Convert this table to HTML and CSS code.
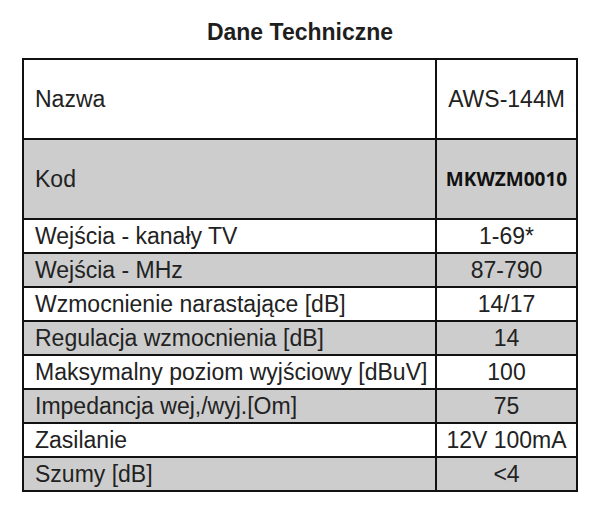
FILE: index.html
```html
<!DOCTYPE html>
<html lang="pl">
<head>
<meta charset="utf-8">
<title>Dane Techniczne</title>
<link rel="stylesheet" href="styles.css">
</head>
<body>
<div class="page">
  <h1 class="title">Dane Techniczne</h1>
  <table class="specs">
    <tr class="tall"><td class="name">Nazwa</td><td class="val">AWS-144M</td></tr>
    <tr class="tall gray"><td class="name">Kod</td><td class="val code">MKWZM0010</td></tr>
    <tr><td class="name">Wejścia - kanały TV</td><td class="val">1-69*</td></tr>
    <tr class="gray"><td class="name">Wejścia - MHz</td><td class="val">87-790</td></tr>
    <tr><td class="name">Wzmocnienie narastające [dB]</td><td class="val">14/17</td></tr>
    <tr class="gray"><td class="name">Regulacja wzmocnienia [dB]</td><td class="val">14</td></tr>
    <tr><td class="name">Maksymalny poziom wyjściowy [dBuV]</td><td class="val">100</td></tr>
    <tr class="gray"><td class="name">Impedancja wej,/wyj.[Om]</td><td class="val">75</td></tr>
    <tr><td class="name">Zasilanie</td><td class="val">12V 100mA</td></tr>
    <tr class="gray"><td class="name">Szumy [dB]</td><td class="val">&lt;4</td></tr>
  </table>
</div>
</body>
</html>
```
FILE: styles.css
```css
html, body {
  margin: 0;
  padding: 0;
  background: #ffffff;
}
.page {
  width: 600px;
  padding-top: 20px;
  font-family: "Liberation Sans", Arial, sans-serif;
  color: #222222;
}
.title {
  margin: 0 0 14px 0;
  font-size: 23px;
  line-height: 24px;
  font-weight: bold;
  text-align: center;
  color: #1e1e1e;
}
.specs {
  margin-left: 22px;
  width: 556px;
  border-collapse: collapse;
  font-size: 23px;
}
.specs td {
  border: 2px solid #111111;
  height: 32px;
  padding: 0;
  line-height: 30px;
  vertical-align: middle;
}
.specs tr.tall td {
  height: 78px;
}
.specs tr.gray td {
  background: #cdcdcd;
}
.name {
  width: 400px;
  padding-left: 11px !important;
  text-align: left;
}
.val {
  text-align: center;
}
.code {
  font-family: "Open Sans", sans-serif;
  font-weight: 700;
  font-size: 19px;
  color: #111111;
}
```
